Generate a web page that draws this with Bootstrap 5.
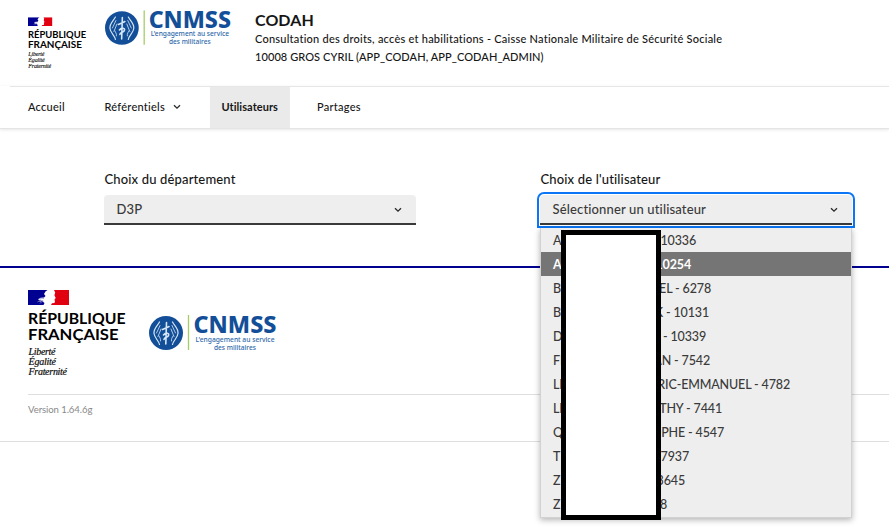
<!DOCTYPE html>
<html lang="fr">
<head>
<meta charset="utf-8">
<meta name="viewport" content="width=device-width, initial-scale=1">
<title>CODAH</title>
<link href="https://cdn.jsdelivr.net/npm/bootstrap@5.3.0/dist/css/bootstrap.min.css" rel="stylesheet">
<style>
body{font-family:Lato,"Open Sans",sans-serif;font-weight:500;font-variant-ligatures:none;color:#161616;font-size:13px;letter-spacing:.15px;height:529px;overflow:hidden}
svg{display:block;flex:none}
svg text{font-family:Lato,sans-serif;letter-spacing:0}
.rf-name{font-size:16px;font-weight:700}
svg .rf-motto{font-family:"Liberation Serif",serif;font-style:italic;font-size:10px;stroke:#222;stroke-width:.2px}
svg .cn-name{font-family:"Noto Sans",sans-serif;font-size:23.5px;font-weight:800;fill:#134f98}
svg .cn-tag{font-family:"Noto Sans",sans-serif;font-size:7.4px;fill:#2f69aa}
.site-head{height:86px;padding:10px 0 0 28px}
.head-rf{margin:6.5px 18px 0 0}
.head-text{margin-left:23px;line-height:18px;font-size:11px}
.brand-title{font-size:16px;line-height:20px;font-weight:700;letter-spacing:.05px}
.t-sub{letter-spacing:.235px}
.t-user{letter-spacing:.08px}
.site-nav{height:43px;border-bottom:1px solid #e4e4e4;box-shadow:0 1px 3px rgba(0,0,0,.1);font-size:11px;letter-spacing:.25px;padding-left:10px}
.nav-rule{border-top:1px solid #e6e6e6;height:42px;padding-left:6px;gap:15.5px}
.site-nav .nav-link{color:#161616;padding:0 12px;line-height:40px;height:41px}
.n1{width:61px}
.site-nav .n2{width:101.5px;height:40px;padding-right:0}
.site-nav .active{background:#eaeaea;font-weight:700;width:80px;letter-spacing:.05px;white-space:nowrap}
.site-main{height:139px;padding:42px 37px 0 104px;border-bottom:2px solid #000091}
.field{width:312px}
.field-label{line-height:16px;margin-bottom:8px;padding-left:.5px}
.select-box{height:30px;background:#eee;border-bottom:2px solid #3a3a3a;border-radius:4px 4px 0 0;padding:1px 14px 0 12.5px;color:#3a3a3a}
.focused{outline:2px solid #0a76f6;outline-offset:1px}
.options{position:absolute;left:0;top:57px;width:312px;height:290px;background:#eee;border:1px solid #d2d2d2;border-top:0;box-shadow:0 2px 6px rgba(0,0,0,.3);z-index:2;color:#3a3a3a;font-size:12.5px;letter-spacing:-.15px}
.option{height:24px;line-height:26px;padding-left:12px;white-space:nowrap}
.option.chosen{background:#757575;color:#fff;font-weight:700}
.option-start{width:14px}
.option-end{width:var(--end);display:flex;justify-content:flex-end}
.redaction{position:absolute;left:21px;top:59px;width:100px;height:290px;background:#fff;border:5px solid #000;z-index:3}
.site-foot{padding:22px 0 0 28px;height:174px;border-bottom:1px solid #dedede}
.foot-logos{height:104px}
.foot-cnmss{margin:25px 0 0 21.5px}
.version{border-top:1px solid #dedede;font-size:9.6px;line-height:14px;padding-top:8px;color:#8a8a8a;font-weight:400;letter-spacing:-.1px}
</style>
<script src="https://cdn.jsdelivr.net/npm/bootstrap@5.3.0/dist/js/bootstrap.bundle.min.js"></script>
</head>
<body class="bg-white">
<svg width="0" height="0" class="position-absolute">
  <symbol id="flag" viewBox="0 0 41 15">
    <path fill="#000091" d="M0 0H19.500L17.500 1.500 16 4 17.500 6 16 7.500 12 8 10 10 13 10 11 12 14 11 16.500 13 15.500 15H0Z"/>
    <path fill="#e1000f" d="M26 0H41V15H23L24 13.300 26.500 13 27 11 26.400 9.800 27.700 8 26.400 5.200 27.200 2.500Z"/>
    <path fill="none" stroke="#8d8dcc" stroke-width=".8" d="M10 9.500l3-1.500 3 .5M9.500 12l3-2 3 1M12 13.500l2-2"/>
  </symbol>
  <symbol id="emblem" viewBox="0 0 41 36">
    <circle cx="17" cy="18" r="17" fill="#134f98"/>
    <g fill="none" stroke="#d7e7f6" stroke-linecap="round" stroke-linejoin="round">
      <path stroke-width="1.200" d="M10.500 29.500C10 26 5.500 23 5 18.500C4.500 13 8.500 11 10.500 7M23.500 29.500C24 26 28.500 23 29 18.500C29.500 13 25.500 11 23.500 7"/>
      <path stroke-width=".8" d="M7.500 18L11 10.500M9 21.500L12 14M11.500 26C12 23.500 10.500 22.500 10 21M26.500 18L23 10.500M25 21.500L22 14M22.500 26C22 23.500 23.500 22.500 24 21"/>
      <path stroke-width="1.600" d="M17.500 7.500L16.800 29M13.500 14.500L17 13 20 11.500M14.500 20C17 17 20.500 18 19.500 20.500C19 22.500 15 22 15 24.500"/>
    </g>
    <path stroke="#a6cd64" stroke-width="1.300" d="M39.500 0V35"/>
  </symbol>
  <symbol id="chev" viewBox="0 0 8 6"><path d="M1 1.200L4 4.200 7 1.200" fill="none" stroke="#2a2a2a" stroke-width="1.300"/></symbol>
</svg>

<header>
  <div class="site-head d-flex align-items-start">
    <svg class="head-rf" width="59" height="54" viewBox="0 0 99 90">
      <use href="#flag" width="41" height="15"/>
      <text class="rf-name" x="0" y="34.500" textLength="97.500" lengthAdjust="spacingAndGlyphs">RÉPUBLIQUE</text>
      <text class="rf-name" x="0" y="51" textLength="90.500" lengthAdjust="spacingAndGlyphs">FRANÇAISE</text>
      <text class="rf-motto" x=".5" y="65" textLength="27">Liberté</text>
      <text class="rf-motto" x=".5" y="75.500" textLength="27.500">Égalité</text>
      <text class="rf-motto" x=".5" y="86" textLength="38.500">Fraternité</text>
    </svg>
    <svg width="127" height="36" viewBox="0 0 128 36">
      <use href="#emblem" width="41" height="36"/>
      <text class="cn-name" x="44" y="18" textLength="83" lengthAdjust="spacingAndGlyphs">CNMSS</text>
      <text class="cn-tag" x="46" y="26.500" textLength="79" lengthAdjust="spacingAndGlyphs">L'engagement au service</text>
      <text class="cn-tag" x="64.500" y="34.500" textLength="42" lengthAdjust="spacingAndGlyphs">des militaires</text>
    </svg>
    <div class="head-text">
      <div class="brand-title"><span>CODAH</span></div>
      <div><span class="t-sub">Consultation des droits, accès et habilitations - Caisse Nationale Militaire de Sécurité Sociale</span></div>
      <div><span class="t-user">10008 GROS CYRIL (APP_CODAH, APP_CODAH_ADMIN)</span></div>
    </div>
  </div>
  <nav class="site-nav">
    <div class="nav-rule nav flex-nowrap">
      <a class="nav-link n1" href="#">Accueil</a>
      <a class="nav-link n2 d-flex align-items-center" href="#">Référentiels<svg class="ms-2" width="8" height="6"><use href="#chev"/></svg></a>
      <a class="nav-link active" href="#">Utilisateurs</a>
      <a class="nav-link" href="#">Partages</a>
    </div>
  </nav>
</header>

<main class="site-main d-flex justify-content-between align-items-start">
  <div class="field">
    <div class="field-label">Choix du département</div>
    <div class="select-box d-flex align-items-center justify-content-between"><span>D3P</span><svg width="8" height="6"><use href="#chev"/></svg></div>
  </div>
  <div class="field position-relative">
    <div class="field-label">Choix de l'utilisateur</div>
    <div class="select-box focused d-flex align-items-center justify-content-between"><span>Sélectionner un utilisateur</span><svg width="8" height="6"><use href="#chev"/></svg></div>
    <div class="options">
      <div class="option d-flex"><span class="option-start">A</span><span class="option-end" style="--end:129px">10336</span></div>
      <div class="option d-flex chosen"><span class="option-start">A</span><span class="option-end" style="--end:124px">10254</span></div>
      <div class="option d-flex"><span class="option-start">B</span><span class="option-end" style="--end:144px">EL - 6278</span></div>
      <div class="option d-flex"><span class="option-start">B</span><span class="option-end" style="--end:142px">K - 10131</span></div>
      <div class="option d-flex"><span class="option-start">D</span><span class="option-end" style="--end:139px">N - 10339</span></div>
      <div class="option d-flex"><span class="option-start">FE</span><span class="option-end" style="--end:143px">AN - 7542</span></div>
      <div class="option d-flex"><span class="option-start">LE</span><span class="option-end" style="--end:223px">RIC-EMMANUEL - 4782</span></div>
      <div class="option d-flex"><span class="option-start">LE</span><span class="option-end" style="--end:155px">ATHY - 7441</span></div>
      <div class="option d-flex"><span class="option-start">Q</span><span class="option-end" style="--end:157px">OPHE - 4547</span></div>
      <div class="option d-flex"><span class="option-start">T</span><span class="option-end" style="--end:122px">7937</span></div>
      <div class="option d-flex"><span class="option-start">Z</span><span class="option-end" style="--end:118px">3645</span></div>
      <div class="option d-flex"><span class="option-start">Z</span><span class="option-end" style="--end:100px">8</span></div>
    </div>
    <div class="redaction"></div>
  </div>
</main>

<footer class="site-foot">
  <div class="foot-logos d-flex align-items-start">
    <svg width="99" height="90" viewBox="0 0 99 90">
      <use href="#flag" width="41" height="15"/>
      <text class="rf-name" x="0" y="33.500" textLength="97.500" lengthAdjust="spacingAndGlyphs">RÉPUBLIQUE</text>
      <text class="rf-name" x="0" y="50" textLength="90.500" lengthAdjust="spacingAndGlyphs">FRANÇAISE</text>
      <text class="rf-motto" x=".5" y="64.500" textLength="27">Liberté</text>
      <text class="rf-motto" x=".5" y="74.800" textLength="27.500">Égalité</text>
      <text class="rf-motto" x=".5" y="85" textLength="38.500">Fraternité</text>
    </svg>
    <svg class="foot-cnmss" width="128" height="36" viewBox="0 0 128 36">
      <use href="#emblem" width="41" height="36"/>
      <text class="cn-name" x="44.500" y="18" textLength="83" lengthAdjust="spacingAndGlyphs">CNMSS</text>
      <text class="cn-tag" x="46.500" y="26.500" textLength="79" lengthAdjust="spacingAndGlyphs">L'engagement au service</text>
      <text class="cn-tag" x="65" y="34.500" textLength="42" lengthAdjust="spacingAndGlyphs">des militaires</text>
    </svg>
  </div>
  <div class="version">Version 1.64.6g</div>
</footer>
</body>
</html>
